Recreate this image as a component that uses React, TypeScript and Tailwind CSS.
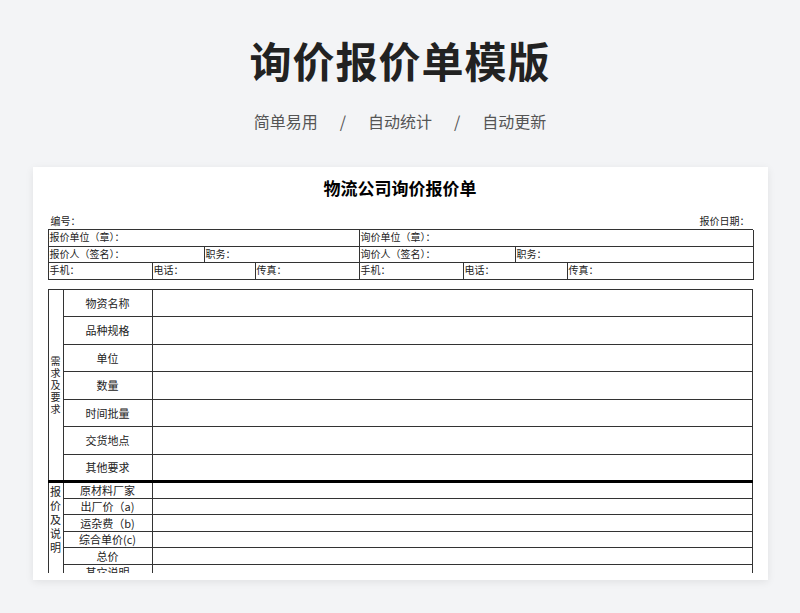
const rowsA = ["物资名称", "品种规格", "单位", "数量", "时间批量", "交货地点", "其他要求"];
const rowsB = ["原材料厂家", "出厂价（a)", "运杂费（b)", "综合单价(c)", "总价", "其它说明"];

const info: [string, number][][] = [
  [["报价单位（章）：", 311], ["询价单位（章）：", 394]],
  [["报价人（签名）：", 156], ["职务：", 155], ["询价人（签名）：", 156], ["职务：", 238]],
  [["手机：", 104], ["电话：", 103], ["传真：", 104], ["手机：", 104], ["电话：", 104], ["传真：", 186]],
];

export default function App() {
  return (
    <div className="w-[800px] h-[613px] overflow-hidden bg-[#f3f4f6] flex flex-col items-center" style={{ fontFamily: '"Noto Sans CJK SC", sans-serif' }}>
      <h1 className="mt-[33px] text-[42px] leading-[54px] font-bold text-[#222] tracking-[1px]">询价报价单模版</h1>
      <div className="mt-[23px] flex gap-[20px] text-[16px] text-[#555] leading-[22px]">
        <span>简单易用</span><span className="px-[2px]">/</span><span>自动统计</span><span className="px-[2px]">/</span><span>自动更新</span>
      </div>
      <div className="mt-[35px] w-[735px] h-[413px] bg-white shadow-[0_2px_8px_rgba(0,0,0,0.08)] px-[15px] overflow-hidden text-[#222]">
        <div className="h-[10px]" />
        <div className="text-center text-[17px] font-bold leading-[22px] text-black">物流公司询价报价单</div>
        <div className="mt-[15px] flex justify-between text-[10px] leading-[14px] px-[3px]">
          <span>编号：</span><span>报价日期：</span>
        </div>
        <div className="mt-[1px] w-[705px] border-t border-l border-[#333] text-[10px] leading-[14px]">
          {info.map((row, i) => (
            <div key={i} className="flex h-[16.5px]">
              {row.map(([t, w], j) => (
                <div key={j} className="border-r border-b border-[#333] px-[1px] shrink-0" style={{ width: w }}>{t}</div>
              ))}
            </div>
          ))}
        </div>
        <div className="mt-[9px] h-[284px] overflow-hidden">
          <table className="w-[705px] border-collapse table-fixed text-[11px]">
            <colgroup><col style={{ width: 15 }} /><col style={{ width: 89 }} /><col /></colgroup>
            <tbody>
              {rowsA.map((r, i) => (
                <tr key={r} className={`h-[27.5px] ${i === 6 ? "border-b-[3px] border-black" : ""}`}>
                  {i === 0 && (
                    <td rowSpan={7} className="border border-[#333] p-0">
                      <div className="flex flex-col items-center text-[10px] leading-[12px]">
                        {"需求及要求".split("").map((c, k) => <span key={k}>{c}</span>)}
                      </div>
                    </td>
                  )}
                  <td className="border border-[#333] text-center">{r}</td>
                  <td className="border border-[#333]" />
                </tr>
              ))}
              {rowsB.map((r, i) => (
                <tr key={r} className="h-[16.5px] leading-[14px]">
                  {i === 0 && (
                    <td rowSpan={6} className="border border-[#333] p-0 align-top">
                      <div className="flex flex-col items-center text-[11px] leading-[14px] pt-[1px]">
                        {"报价及说明".split("").map((c, k) => <span key={k}>{c}</span>)}
                      </div>
                    </td>
                  )}
                  <td className="border border-[#333] text-center">{r}</td>
                  <td className="border border-[#333]" />
                </tr>
              ))}
            </tbody>
          </table>
        </div>
      </div>
    </div>
  );
}
